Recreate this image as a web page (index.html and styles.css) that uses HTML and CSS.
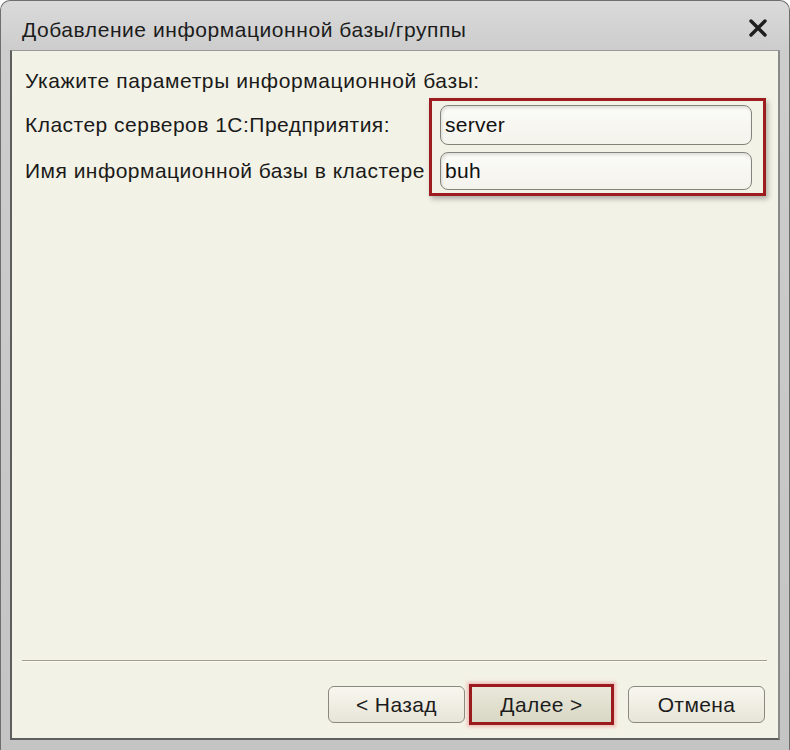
FILE: index.html
```html
<!DOCTYPE html>
<html lang="ru">
<head>
<meta charset="utf-8">
<title>Добавление информационной базы/группы</title>
<link rel="stylesheet" href="styles.css">
</head>
<body>
<div class="window">
  <div class="titlebar">
    <span class="title">Добавление информационной базы/группы</span>
    <svg class="close" width="20" height="20" viewBox="0 0 20 20" aria-label="Закрыть">
      <path d="M3 3 L17 17 M17 3 L3 17" stroke="#1e1e1e" stroke-width="3.4" stroke-linecap="round"/>
    </svg>
  </div>
  <div class="panel">
    <div class="content">
      <div class="heading">Укажите параметры информационной базы:</div>
      <div class="form">
        <div class="labels">
          <div class="label l1">Кластер серверов 1С:Предприятия:</div>
          <div class="label l2">Имя информационной базы в кластере</div>
        </div>
        <div class="highlight">
          <div class="input i1">server</div>
          <div class="input i2">buh</div>
        </div>
      </div>
    </div>
    <div class="separator"></div>
    <div class="buttons">
      <div class="btn">&lt; Назад</div>
      <div class="btn-mark"><div class="btn inner">Далее &gt;</div></div>
      <div class="btn cancel">Отмена</div>
    </div>
  </div>
</div>
</body>
</html>
```
FILE: styles.css
```css
* { box-sizing: border-box; }
html, body { margin: 0; padding: 0; background: #ffffff; }
body {
  font-family: "Liberation Sans", Arial, sans-serif;
  color: #1a1a1a;
  width: 790px;
  height: 750px;
  overflow: hidden;
  letter-spacing: 0.4px;
}
.window {
  width: 790px;
  height: 750px;
  border: 1px solid #6e6e6e;
  border-bottom: none;
  border-radius: 10px 10px 0 0;
  background: linear-gradient(#dadada 0px, #cdcdcd 48px, #c4c4c4 100%);
  display: flex;
  flex-direction: column;
}
.titlebar {
  height: 49px;
  display: flex;
  align-items: center;
  padding: 8px 21px 0 21px;
  justify-content: space-between;
}
.title {
  font-size: 21px;
  color: #1c1c1c;
  letter-spacing: 0.56px;
}
.close { margin-right: 0px; margin-top: -4px; }
.panel {
  margin: 0 9px;
  height: 690px;
  border: 2px solid #5e5e5e;
  border-top: 1px solid #9a9a9a;
  border-right-color: #8a8a8a;
  background: #f3f2e6;
  display: flex;
  flex-direction: column;
}
.content {
  flex: 1;
  padding: 17px 0 0 13px;
}
.heading {
  font-size: 21px;
  line-height: 26px;
  letter-spacing: 0.6px;
}
.form {
  display: flex;
  margin-top: 4px;
}
.labels {
  width: 404px;
  display: flex;
  flex-direction: column;
  padding-top: 7px;
}
.label {
  font-size: 21px;
  line-height: 26px;
  white-space: nowrap;
  letter-spacing: 0.48px;
}
.l1 { height: 40px; display: flex; align-items: center; }
.l2 { height: 38px; margin-top: 7px; display: flex; align-items: center; }
.highlight {
  width: 337px;
  border: 3px solid #9d1c20;
  padding: 4px 11px 3px 8px;
  display: flex;
  flex-direction: column;
  gap: 7px;
  box-shadow: 2px 3px 5px rgba(0,0,0,0.28);
}
.input {
  border: 1px solid #85847c;
  border-radius: 8px;
  background: linear-gradient(#fbfbf8, #f4f3ec);
  box-shadow: inset 1px 2px 3px rgba(0,0,0,0.12);
  font-size: 21px;
  padding-left: 4px;
  display: flex;
  align-items: center;
  color: #111;
  letter-spacing: 0.3px;
}
.i1 { height: 40px; }
.i2 { height: 38px; }
.separator {
  margin: 0 11px 0 10px;
  height: 2px;
  background: #a19f8c;
  border-bottom: 1px solid #fbfaf2;
}
.buttons {
  display: flex;
  justify-content: flex-end;
  align-items: center;
  padding: 22px 13px 13px 0;
}
.btn {
  width: 137px;
  height: 37px;
  border: 1px solid #8a897f;
  border-radius: 6px;
  background: linear-gradient(#f8f7ef, #e7e5d8);
  font-size: 21px;
  display: flex;
  align-items: center;
  justify-content: center;
  color: #1c1c1c;
}
.btn-mark {
  margin-left: 4px;
  margin-right: 14px;
  width: 145px;
  height: 41px;
  border: 3px solid #9a1a1e;
  padding: 0;
  box-shadow: 0 0 3px 2px rgba(235,150,150,0.55);
  display: flex;
}
.btn.inner {
  width: 100%;
  height: 100%;
  border: none;
  border-radius: 0;
  background: linear-gradient(#e9e8da, #d9d8c6);
}
```
